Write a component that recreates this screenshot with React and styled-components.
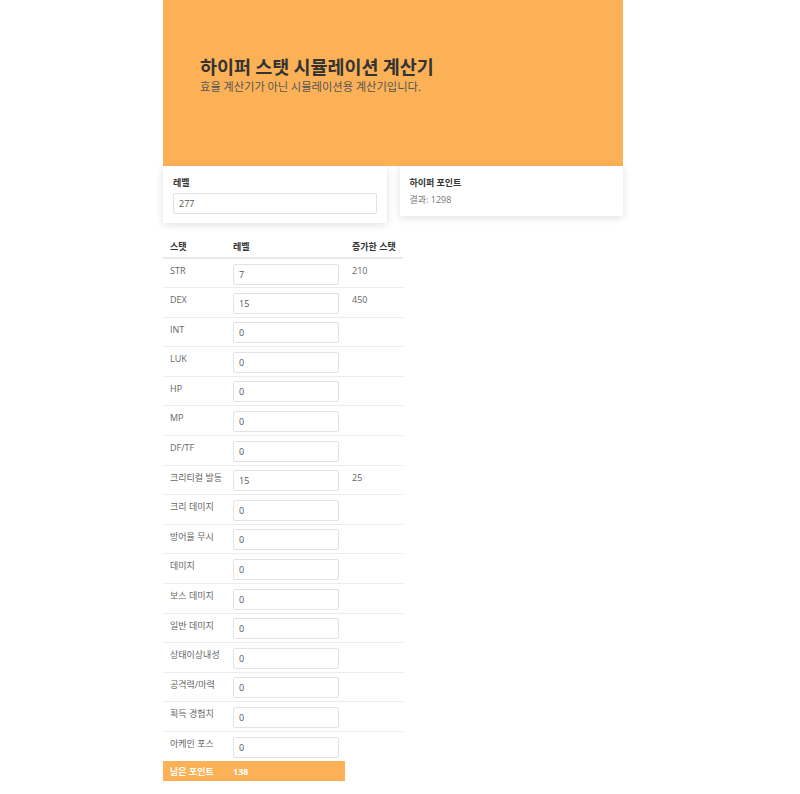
import styled, { createGlobalStyle } from 'styled-components';

const GlobalStyle = createGlobalStyle`
  body {
    margin: 0;
    font-family: "Open Sans", "Noto Sans CJK KR", sans-serif;
    color: #555;
    background: #fff;
  }
  * { box-sizing: border-box; }
`

const stats = [
  { name: 'STR', level: '7', added: '210' },
  { name: 'DEX', level: '15', added: '450' },
  { name: 'INT', level: '0', added: '' },
  { name: 'LUK', level: '0', added: '' },
  { name: 'HP', level: '0', added: '' },
  { name: 'MP', level: '0', added: '' },
  { name: 'DF/TF', level: '0', added: '' },
  { name: '크리티컬 발동', level: '15', added: '25' },
  { name: '크리 데미지', level: '0', added: '' },
  { name: '방어율 무시', level: '0', added: '' },
  { name: '데미지', level: '0', added: '' },
  { name: '보스 데미지', level: '0', added: '' },
  { name: '일반 데미지', level: '0', added: '' },
  { name: '상태이상내성', level: '0', added: '' },
  { name: '공격력/마력', level: '0', added: '' },
  { name: '획득 경험치', level: '0', added: '' },
  { name: '아케인 포스', level: '0', added: '' },
]

export default function App() {
  return (
    <>
      <GlobalStyle />
      <Page>
        <Hero>
          <h1>하이퍼 스탯 시뮬레이션 계산기</h1>
          <p>효율 계산기가 아닌 시뮬레이션용 계산기입니다.</p>
        </Hero>
        <Cards>
          <Card>
            <CardTitle>레벨</CardTitle>
            <Field defaultValue="277" $wide />
          </Card>
          <Card $short>
            <CardTitle>하이퍼 포인트</CardTitle>
            <Result>결과: 1298</Result>
          </Card>
        </Cards>
        <StatTable>
          <colgroup>
            <col width="63" />
            <col width="119" />
            <col />
          </colgroup>
          <thead>
            <tr>
              <th>스탯</th>
              <th>레벨</th>
              <th>증가한 스탯</th>
            </tr>
          </thead>
          <tbody>
            {stats.map(s => (
              <tr key={s.name}>
                <td>{s.name}</td>
                <td><Field defaultValue={s.level} /></td>
                <td>{s.added}</td>
              </tr>
            ))}
          </tbody>
        </StatTable>
        <Remain>
          <span>남은 포인트</span>
          <span>138</span>
        </Remain>
      </Page>
    </>
  )
}

const Page = styled.div`
width: 460px;
margin-left: 163px;
`

const Hero = styled.header`
height: 166px;
background: #fcb157;
padding: 56px 37px 0;

h1 {
  margin: 0 0 2px;
  font-family: "Noto Sans CJK KR", sans-serif;
  font-size: 18.5px;
  font-weight: 700;
  line-height: 21px;
  color: #333;
}

p {
  margin: 0;
  font-family: "Noto Sans CJK KR", sans-serif;
  font-size: 11.3px;
  line-height: 14px;
  color: #555;
}
`

const Cards = styled.div`
display: grid;
grid-template-columns: 1fr 1fr;
gap: 13px;
align-items: start;
`

const Card = styled.div`
background: #fff;
padding: 10px;
height: ${props => props.$short ? '50px' : '57px'};
box-shadow: 0 2px 8px rgba(0, 0, 0, 0.12);
`

const CardTitle = styled.div`
font-family: "Noto Sans CJK KR", sans-serif;
font-size: 9px;
font-weight: 700;
line-height: 13px;
color: #333;
margin-bottom: 4px;
`

const Result = styled.div`
font-size: 9px;
line-height: 13px;
color: #777;
`

const Field = styled.input`
display: block;
width: ${props => props.$wide ? '100%' : '106px'};
height: 21px;
padding: 0 5px;
border: 1px solid #e2e2e2;
border-radius: 2px;
background: #fff;
font-family: "Open Sans", sans-serif;
font-size: 9px;
color: #555;
outline: none;
`

const StatTable = styled.table`
width: 240px;
margin-top: 13px;
table-layout: fixed;
border-collapse: collapse;
font-size: 9px;
color: #666;

th {
  text-align: left;
  font-weight: 700;
  color: #333;
  padding: 5px 7px 0;
  height: 22px;
  line-height: 12px;
  white-space: nowrap;
  vertical-align: top;
  border-bottom: 2px solid #e8e8e8;
}

td {
  vertical-align: top;
  padding: 6px 7px 0;
  height: 29.6px;
  line-height: 12px;
  border-bottom: 1px solid #ececec;
  white-space: nowrap;
}

td:nth-child(2) {
  padding-top: 4.5px;
}

tbody tr:last-child td {
  border-bottom: none;
}
`

const Remain = styled.div`
display: grid;
grid-template-columns: 63px 119px;
width: 182px;
height: 20px;
align-items: center;
background: #fcb157;
color: #fff;
font-size: 9px;
font-weight: 700;

span {
  padding-left: 7px;
}
`
